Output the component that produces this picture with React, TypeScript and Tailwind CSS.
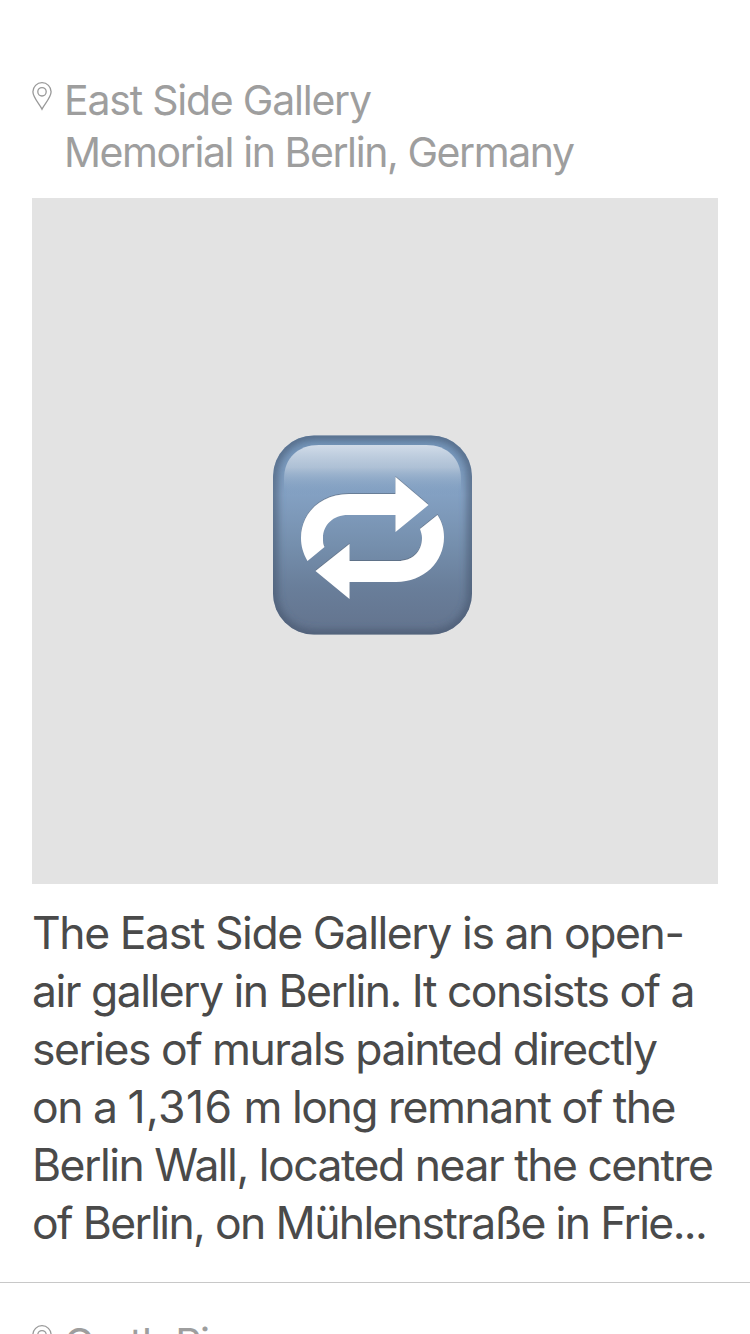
type Segment = { text: string; spacing: string };

const body: Segment[][] = [
  [{ text: 'The East Side Gallery is an open-', spacing: 'tracking-[-1.43px]' }],
  [{ text: 'air gallery in Berlin. It consists of a', spacing: 'tracking-[-1.53px]' }],
  [{ text: 'series of murals painted directly', spacing: 'tracking-[-1.52px]' }],
  [
    { text: 'on a ', spacing: 'tracking-[-1.5px]' },
    { text: '1,316', spacing: 'tracking-[0.4px]' },
    { text: ' m long remnant of the', spacing: 'tracking-[-1.5px]' },
  ],
  [{ text: 'Berlin Wall, located near the centre', spacing: 'tracking-[-1.51px]' }],
  [{ text: 'of Berlin, on Mühlenstraße in Frie...', spacing: 'tracking-[-1.66px]' }],
];

function Pin() {
  return (
    <svg className="mt-[8px] h-[30px] w-[20px] shrink-0" viewBox="0 0 20 30" fill="none" stroke="#999" strokeWidth="1.3">
      <path d="M10 27.2C8.2 23 .9 15.6 .9 9.8a9.1 9.1 0 0 1 18.2 0c0 5.8-7.3 13.2-9.1 17.4Z" />
      <circle cx="10" cy="9.8" r="4.2" />
    </svg>
  );
}

function RepeatButton() {
  return (
    <svg className="h-[200px] w-[200px]" viewBox="0 0 200 200">
      <defs>
        <linearGradient id="face" x1="0" y1="0" x2="0" y2="1">
          <stop offset="0" stopColor="#7193b8" />
          <stop offset=".3" stopColor="#83a0c2" />
          <stop offset=".55" stopColor="#758fad" />
          <stop offset=".76" stopColor="#697e9a" />
          <stop offset="1" stopColor="#63738d" />
        </linearGradient>
        <linearGradient id="gloss" x1="0" y1="0" x2="0" y2="1">
          <stop offset="0" stopColor="#d4deea" stopOpacity=".97" />
          <stop offset=".45" stopColor="#bccbdc" stopOpacity=".78" />
          <stop offset="1" stopColor="#87a5c6" stopOpacity="0" />
        </linearGradient>
        <filter id="soft" x="-10%" y="-10%" width="120%" height="120%">
          <feGaussianBlur stdDeviation="4" />
        </filter>
        <filter id="rim" x="-10%" y="-10%" width="120%" height="120%">
          <feDropShadow dx="0" dy="-.7" stdDeviation=".7" floodColor="#4b5563" floodOpacity=".65" />
        </filter>
        <clipPath id="tile"><rect x="0" y=".5" width="199" height="199" rx="41" /></clipPath>
      </defs>
      <g clipPath="url(#tile)">
        <rect width="200" height="200" fill="url(#face)" />
        <rect width="199" height="200" rx="41" fill="none" stroke="#42526a" strokeOpacity=".78" strokeWidth="8" filter="url(#soft)" />
        <path d="M11 60V44C11 23 25 10 46 10H153C174 10 188 23 188 44V60Z" fill="url(#gloss)" />
      </g>
      <g fill="#fff" filter="url(#rim)">
        <path d="M34.500 126C30 118 28 111 28 103C28 78 48 59 76 59H122.500V42L155.500 70L122.500 97V80H75C60 80 50 90 50 103C50 107 50 109 51.500 112Z" />
        <path d="M164.500 80C169 87 171 94 171 102C171 127 151 147 123 147H76.500V164L42.500 136L76.500 109V126H125C139 126 149 117 149 103C149 100 148 97 147 94Z" />
      </g>
    </svg>
  );
}

export default function App() {
  return (
    <main className="flex h-[1334px] w-[750px] flex-col overflow-hidden bg-white font-['Inter',sans-serif]">
      <article className="flex h-[1283px] shrink-0 flex-col border-b border-[#c8c8c8]">
        <header className="flex h-[198px] gap-3 pt-[74px] pl-8 text-[41px] leading-[52px] text-[#9e9e9e]">
          <Pin />
          <div className="whitespace-nowrap">
            <h1 className="tracking-[-1.22px]">East Side Gallery</h1>
            <p className="tracking-[-1.42px]">Memorial in Berlin, Germany</p>
          </div>
        </header>
        <div className="mx-8 flex h-[686px] items-center justify-center bg-[#e3e3e3] pr-[5px] pb-[13px]">
          <RepeatButton />
        </div>
        <div className="mt-[20px] pl-8 text-[44.5px] leading-[58px] text-[#4a4a4a]">
          {body.map((line, i) => (
            <p key={i} className="whitespace-nowrap">
              {line.map((s) => <span key={s.text} className={s.spacing}>{s.text}</span>)}
            </p>
          ))}
        </div>
      </article>
      <article className="flex shrink-0 gap-3 pt-[34px] pl-8 text-[41px] leading-[52px] text-[#9e9e9e]">
        <Pin />
        <h2 className="tracking-[-1.28px]">Garth Pier</h2>
      </article>
    </main>
  );
}
